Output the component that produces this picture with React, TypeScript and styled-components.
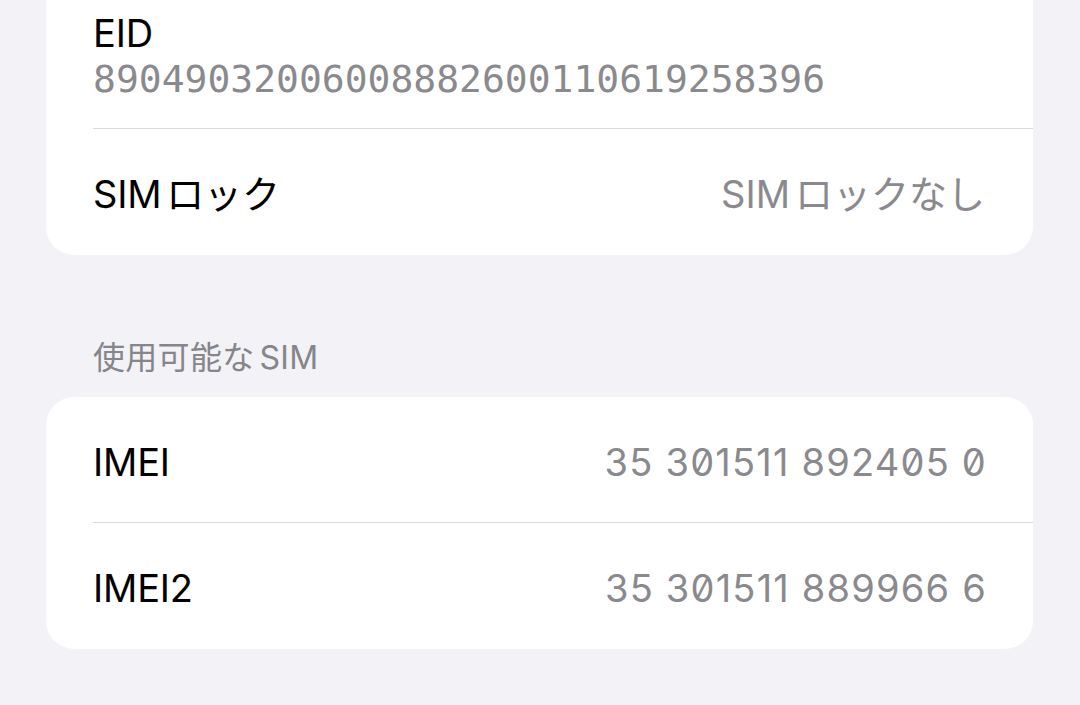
import React from "react";
import styled, { createGlobalStyle } from "styled-components";

const GlobalStyle = createGlobalStyle`
    html, body {
        margin: 0;
        padding: 0;
        background: #f2f2f7;
    }
    body {
        font-family: Inter, "Noto Sans CJK JP", sans-serif;
        -webkit-font-smoothing: antialiased;
    }
`;

const Page = styled.div`
    width: 1080px;
    height: 705px;
    overflow: hidden;
    box-sizing: border-box;
    padding: 0 47px 0 46px;
    display: flex;
    flex-direction: column;
`;

const Card = styled.div<{ $flatTop?: boolean }>`
    background: #ffffff;
    border-radius: ${(p) => (p.$flatTop ? "0 0 28px 28px" : "28px")};
    display: flex;
    flex-direction: column;
    padding-left: 47px;
`;

const Row = styled.div<{ $last?: boolean; $height?: number }>`
    display: flex;
    align-items: center;
    justify-content: space-between;
    box-sizing: border-box;
    height: ${(p) => p.$height || 126}px;
    padding: 4px 48px 0 0;
    border-bottom: ${(p) => (p.$last ? "none" : "1px solid #d9d9dd")};
`;

const StackRow = styled.div`
    display: flex;
    flex-direction: column;
    gap: 1px;
    padding: 10px 48px 27px 0;
    border-bottom: 1px solid #d9d9dd;
`;

const Label = styled.span`
    font-size: 38px;
    line-height: 46px;
    color: #000000;
    letter-spacing: -0.2px;
`;

const Value = styled.span`
    font-size: 38px;
    line-height: 46px;
    color: #8a8a8e;
    font-feature-settings: "zero" 1;
`;

const NumberValue = styled(Value)`
    letter-spacing: 1.2px;
    margin-right: -2px;
`;

const MonoValue = styled.span`
    font-family: "DejaVu Sans Mono", monospace;
    font-size: 38px;
    line-height: 44px;
    color: #8a8a8e;
`;

// small gap iOS puts between latin letters and kana
const Latin = styled.span`
    margin-right: 5px;
`;

const SectionHeader = styled.div`
    margin: 83px 0 19px 47px;
    font-size: 32px;
    line-height: 40px;
    color: #85858a;
    letter-spacing: 0.3px;
`;

export default function App() {
    return (
        <Page>
            <GlobalStyle />
            <Card $flatTop>
                <StackRow>
                    <Label>EID</Label>
                    <MonoValue>89049032006008882600110619258396</MonoValue>
                </StackRow>
                <Row $last $height={126}>
                    <Label><Latin>SIM</Latin>ロック</Label>
                    <Value><Latin>SIM</Latin>ロックなし</Value>
                </Row>
            </Card>
            <SectionHeader><Latin>使用可能な</Latin>SIM</SectionHeader>
            <Card>
                <Row>
                    <Label>IMEI</Label>
                    <NumberValue>35 301511 892405 0</NumberValue>
                </Row>
                <Row $last $height={126}>
                    <Label>IMEI2</Label>
                    <NumberValue>35 301511 889966 6</NumberValue>
                </Row>
            </Card>
        </Page>
    );
}
